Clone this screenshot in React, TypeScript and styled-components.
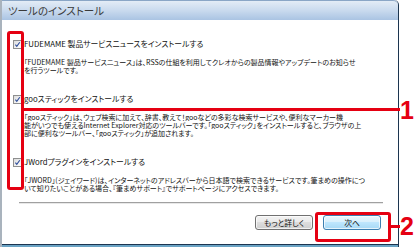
import styled, { createGlobalStyle } from "styled-components";

const GlobalStyle = createGlobalStyle`
  html, body {
    margin: 0;
    padding: 0;
    background: #ffffff;
  }
  body {
    font-family: "Noto Sans CJK JP", "Noto Sans", sans-serif;
  }
`;

interface OptionItem {
  label: string;
  lines: string[];
}

const OPTIONS: OptionItem[] = [
  {
    label: "FUDEMAME 製品サービスニュースをインストールする",
    lines: [
      "「FUDEMAME 製品サービスニュース」は、RSSの仕組を利用してクレオからの製品情報やアップデートのお知らせ",
      "を行うツールです。",
    ],
  },
  {
    label: "gooスティックをインストールする",
    lines: [
      "「gooスティック」は、ウェブ検索に加えて、辞書、教えて！gooなどの多彩な検索サービスや、便利なマーカー機",
      "能がいつでも使えるInternet Explorer対応のツールバーです。「gooスティック」をインストールすると、ブラウザの上",
      "部に便利なツールバー、「gooスティック」が追加されます。",
    ],
  },
  {
    label: "JWordプラグインをインストールする",
    lines: [
      "「JWORD」(ジェイワード)は、インターネットのアドレスバーから日本語で検索できるサービスです。筆まめの操作につ",
      "いて知りたいことがある場合、『筆まめサポート』でサポートページにアクセスできます。",
    ],
  },
];

function CheckMark() {
  return (
    <svg width="9" height="9" viewBox="0 0 9 9">
      <path d="M1.8 4.6 L3.6 6.8 L7.4 1.6" fill="none" stroke="#2a4a9a" strokeWidth="1.4" />
    </svg>
  );
}

function App() {
  return (
    <Page>
      <GlobalStyle />
      <Window>
        <TitleBar>ツールのインストール</TitleBar>
        <Body>
          {OPTIONS.map((opt, i) => (
            <Section key={i} $last={i === OPTIONS.length - 1}>
              <CheckRow>
                <CheckBox>
                  <CheckMark />
                </CheckBox>
                <CheckLabel>{opt.label}</CheckLabel>
              </CheckRow>
              <Description>
                {opt.lines.map((line, j) => (
                  <DescLine key={j}>{line}</DescLine>
                ))}
              </Description>
            </Section>
          ))}
          <Separator />
          <ButtonRow>
            <Button>もっと詳しく</Button>
            <Button $primary>次へ</Button>
          </ButtonRow>
        </Body>
        <FrameBottom />
      </Window>

      <RedFrame $left={7} $top={31} $width={17} $height={159} />
      <RedLine $left={23} $top={108} $width={377} />
      <Callout $top={96}>1</Callout>

      <RedFrame $left={315} $top={212} $width={76} $height={30} />
      <RedLine $left={390} $top={225} $width={10} />
      <Callout $top={212}>2</Callout>
    </Page>
  );
}

const Page = styled.div`
  position: relative;
  width: 415px;
  height: 247px;
  overflow: hidden;
  background: #ffffff;
`;

const Window = styled.div`
  width: 396px;
  height: 247px;
  border-left: 2px solid #a9b3bd;
  border-right: 1px solid #1c3550;
  border-top-right-radius: 5px;
  background: #ffffff;
  display: flex;
  flex-direction: column;
`;

const TitleBar = styled.div`
  height: 20px;
  flex-shrink: 0;
  padding-left: 6px;
  display: flex;
  align-items: center;
  background: linear-gradient(to bottom, #e3ecf6 0%, #c9daee 50%, #aac4e3 100%);
  border-top-right-radius: 5px;
  border-top: 1px solid #8aa6c6;
  box-sizing: border-box;
  font-size: 10.5px;
  color: #3a3a3a;
  font-feature-settings: "palt";
`;

const Body = styled.div`
  flex: 1;
  display: flex;
  flex-direction: column;
  padding: 19px 15px 0 11px;
`;

const FrameBottom = styled.div`
  height: 2px;
  flex-shrink: 0;
  border-top: 1px solid #1c3550;
  background: #6aa3c4;
`;

const Section = styled.div<{ $last?: boolean }>`
  display: flex;
  flex-direction: column;
  margin-bottom: ${(p) => (p.$last ? "10px" : "20px")};
`;

const CheckRow = styled.div`
  display: flex;
  align-items: center;
  height: 10px;
  gap: 2px;
`;

const CheckBox = styled.div`
  width: 9px;
  height: 9px;
  box-sizing: border-box;
  border: 1px solid #8e8f8f;
  background: linear-gradient(135deg, #dcdcdc, #ffffff);
  display: flex;
  align-items: center;
  justify-content: center;
`;

const CheckLabel = styled.span`
  font-size: 7.8px;
  line-height: 10px;
  color: #111111;
  white-space: nowrap;
  font-feature-settings: "palt";
`;

const Description = styled.div`
  margin-top: 9px;
  padding-left: 11px;
  display: flex;
  flex-direction: column;
`;

const DescLine = styled.div`
  font-size: 7px;
  line-height: 8px;
  height: 8px;
  overflow: hidden;
  color: #111111;
  white-space: nowrap;
  font-feature-settings: "palt";
`;

const Separator = styled.div`
  margin-left: 6px;
  height: 1px;
  background: #a0a0a0;
  border-bottom: 1px solid #e8e8e8;
`;

const ButtonRow = styled.div`
  display: flex;
  justify-content: flex-end;
  gap: 10px;
  margin-top: 11px;
  padding-right: 2px;
`;

const Button = styled.div<{ $primary?: boolean }>`
  width: 58px;
  height: 15px;
  box-sizing: border-box;
  border-radius: 3px;
  border: 1px solid ${(p) => (p.$primary ? "#3c7fb1" : "#707070")};
  background: ${(p) =>
    p.$primary
      ? "linear-gradient(to bottom, #eaf6fd 0%, #d9f0fc 45%, #bee6fd 50%, #a7d9f5 100%)"
      : "linear-gradient(to bottom, #f2f2f2 0%, #ebebeb 45%, #dddddd 50%, #cfcfcf 100%)"};
  box-shadow: inset 0 0 0 1px rgba(255, 255, 255, 0.7);
  display: flex;
  align-items: center;
  justify-content: center;
  font-size: 7.8px;
  color: #111111;
  font-feature-settings: "palt";
`;

const RedFrame = styled.div<{ $left: number; $top: number; $width: number; $height: number }>`
  position: absolute;
  left: ${(p) => p.$left}px;
  top: ${(p) => p.$top}px;
  width: ${(p) => p.$width}px;
  height: ${(p) => p.$height}px;
  box-sizing: border-box;
  border: 3px solid #e50012;
  border-radius: 3px;
`;

const RedLine = styled.div<{ $left: number; $top: number; $width: number }>`
  position: absolute;
  left: ${(p) => p.$left}px;
  top: ${(p) => p.$top}px;
  width: ${(p) => p.$width}px;
  height: 3px;
  background: #e50012;
`;

const Callout = styled.div<{ $top: number }>`
  position: absolute;
  left: 400px;
  top: ${(p) => p.$top}px;
  font-family: "Liberation Sans", Arial, sans-serif;
  font-weight: bold;
  font-size: 25px;
  line-height: 28px;
  color: #e50012;
`;

export default App;
